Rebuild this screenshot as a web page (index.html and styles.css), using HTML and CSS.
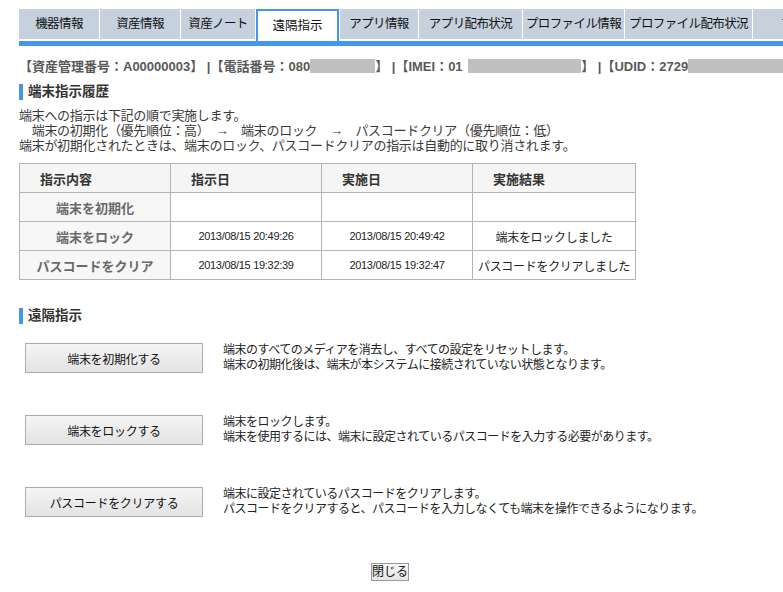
FILE: index.html
```html
<!DOCTYPE html>
<html lang="ja">
<head>
<meta charset="utf-8">
<title>遠隔指示</title>
<link rel="stylesheet" href="styles.css">
</head>
<body>
<div class="page">
  <nav class="tabs">
    <a class="tab tab--w80">機器情報</a>
    <a class="tab tab--w80">資産情報</a>
    <a class="tab tab--w74">資産ノート</a>
    <a class="tab tab--active">遠隔指示</a>
    <a class="tab tab--w78">アプリ情報</a>
    <a class="tab tab--w103">アプリ配布状況</a>
    <a class="tab tab--w101">プロファイル情報</a>
    <a class="tab tab--w127">プロファイル配布状況</a>
    <a class="tab tab--w127">プロファイル</a>
  </nav>
  <div class="tabbar"></div>

  <p class="device-info">【資産管理番号：A00000003】 |【電話番号：080<span class="mask mask--phone"></span>】 |【IMEI：01 <span class="mask mask--imei"></span>】 |【UDID：2729<span class="mask mask--udid"></span></p>

  <h2 class="section-title">端末指示履歴</h2>
  <p class="notice">端末への指示は下記の順で実施します。<br>
  &#12288;端末の初期化（優先順位：高）　→　端末のロック　→　パスコードクリア（優先順位：低）<br>
  端末が初期化されたときは、端末のロック、パスコードクリアの指示は自動的に取り消されます。</p>

  <table class="history">
    <thead>
      <tr><th>指示内容</th><th>指示日</th><th>実施日</th><th>実施結果</th></tr>
    </thead>
    <tbody>
      <tr><td class="cmd">端末を初期化</td><td></td><td></td><td></td></tr>
      <tr><td class="cmd">端末をロック</td><td class="date">2013/08/15 20:49:26</td><td class="date">2013/08/15 20:49:42</td><td class="result">端末をロックしました</td></tr>
      <tr><td class="cmd">パスコードをクリア</td><td class="date">2013/08/15 19:32:39</td><td class="date">2013/08/15 19:32:47</td><td class="result">パスコードをクリアしました</td></tr>
    </tbody>
  </table>

  <h2 class="section-title section-title--remote">遠隔指示</h2>
  <div class="actions">
    <div class="action">
      <button class="action-btn">端末を初期化する</button>
      <p class="action-desc">端末のすべてのメディアを消去し、すべての設定をリセットします。<br>端末の初期化後は、端末が本システムに接続されていない状態となります。</p>
    </div>
    <div class="action">
      <button class="action-btn">端末をロックする</button>
      <p class="action-desc">端末をロックします。<br>端末を使用するには、端末に設定されているパスコードを入力する必要があります。</p>
    </div>
    <div class="action">
      <button class="action-btn">パスコードをクリアする</button>
      <p class="action-desc">端末に設定されているパスコードをクリアします。<br>パスコードをクリアすると、パスコードを入力しなくても端末を操作できるようになります。</p>
    </div>
  </div>

  <div class="footer">
    <button class="close-btn">閉じる</button>
  </div>
</div>
</body>
</html>
```

FILE: styles.css
```css
html, body {
  margin: 0;
  padding: 0;
  background: #ffffff;
  overflow: hidden;
}

body {
  font-family: "Liberation Sans", "Noto Sans CJK JP", sans-serif;
  font-size: 13px;
  color: #333333;
}

.page {
  padding: 9px 22px 0 19px;
}

/* Tabs */
.tabs {
  display: flex;
  align-items: flex-end;
  gap: 1px;
  height: 32px;
  white-space: nowrap;
}

.tab {
  flex: none;
  box-sizing: border-box;
  height: 30px;
  margin-bottom: 2px;
  background: #c6d1dd;
  color: #111111;
  font-size: 12.5px;
  line-height: 30px;
  text-align: center;
  letter-spacing: -0.6px;
  overflow: hidden;
}

.tab--w80 { width: 80px; }
.tab--w74 { width: 74px; }
.tab--w78 { width: 78px; }
.tab--w103 { width: 103px; }
.tab--w101 { width: 101px; }
.tab--w127 { width: 127px; }

.tab--active {
  width: 83px;
  height: 32px;
  margin-bottom: 0;
  background: #ffffff;
  border: 2px solid #4396ec;
  border-bottom: none;
  line-height: 30px;
  letter-spacing: 0;
}

.tabbar {
  height: 5px;
  background: #4396ec;
  margin-right: -22px;
}

/* Device info */
.device-info {
  margin: 13px 0 0;
  font-size: 13px;
  line-height: 15px;
  font-weight: bold;
  color: #595959;
  white-space: nowrap;
}

.mask {
  display: inline-block;
  height: 14px;
  vertical-align: -2px;
  background: #c0c0c0;
}

.mask--phone { width: 65px; }
.mask--imei { width: 113px; margin-left: 2px; }
.mask--udid { width: 120px; }

/* Section titles */
.section-title {
  margin: 10px 0 0;
  padding-left: 5px;
  border-left: 4px solid #4396ec;
  font-size: 13.5px;
  line-height: 16px;
  font-weight: bold;
  color: #333333;
}

.section-title--remote {
  margin-top: 28px;
}

.notice {
  margin: 8px 0 0;
  font-size: 13px;
  line-height: 15px;
  color: #3a3a3a;
  white-space: nowrap;
  letter-spacing: -0.3px;
}

/* History table */
.history {
  margin-top: 10px;
  border-collapse: collapse;
  width: 617px;
  table-layout: fixed;
}

.history th,
.history td {
  border: 1px solid #b4b4b4;
  height: 29px;
  padding: 0;
  box-sizing: border-box;
}

.history th:nth-child(1),
.history th:nth-child(2),
.history th:nth-child(3) { width: 151px; }

.history th {
  background: #f5f5f5;
  text-align: left;
  padding-left: 20px;
  font-size: 13px;
  font-weight: bold;
  color: #333333;
}

.history td.cmd {
  background: #f7f7f7;
  text-align: center;
  font-size: 13px;
  font-weight: bold;
  color: #6a6a6a;
}

.history td.date {
  text-align: center;
  font-size: 11px;
  letter-spacing: -0.3px;
  color: #222222;
}

.history td.result {
  text-align: center;
  font-size: 12px;
  letter-spacing: -0.3px;
  color: #222222;
}

/* Actions */
.actions {
  margin-top: 19px;
  padding-left: 6px;
  display: flex;
  flex-direction: column;
  gap: 42px;
}

.action {
  display: flex;
  align-items: flex-start;
  gap: 20px;
}

.action-btn {
  flex: none;
  width: 178px;
  height: 30px;
  margin: 0;
  padding: 0;
  border: 1px solid #acacac;
  border-radius: 0;
  background: linear-gradient(#f5f5f5, #e3e3e3);
  font-family: "Liberation Sans", "Noto Sans CJK JP", sans-serif;
  font-size: 12px;
  color: #111111;
  letter-spacing: -0.3px;
}

.action-desc {
  margin: 0;
  font-size: 12px;
  line-height: 15px;
  color: #222222;
  white-space: nowrap;
  letter-spacing: -0.5px;
}

/* Footer */
.footer {
  margin-top: 46px;
  text-align: center;
}

.close-btn {
  width: 38px;
  height: 18px;
  margin: 0;
  padding: 0;
  border: 1px solid #9a9a9a;
  border-radius: 0;
  background: linear-gradient(#f6f6f6, #e6e6e6);
  font-family: "Liberation Sans", "Noto Sans CJK JP", sans-serif;
  font-size: 12px;
  line-height: 16px;
  color: #111111;
}
```
